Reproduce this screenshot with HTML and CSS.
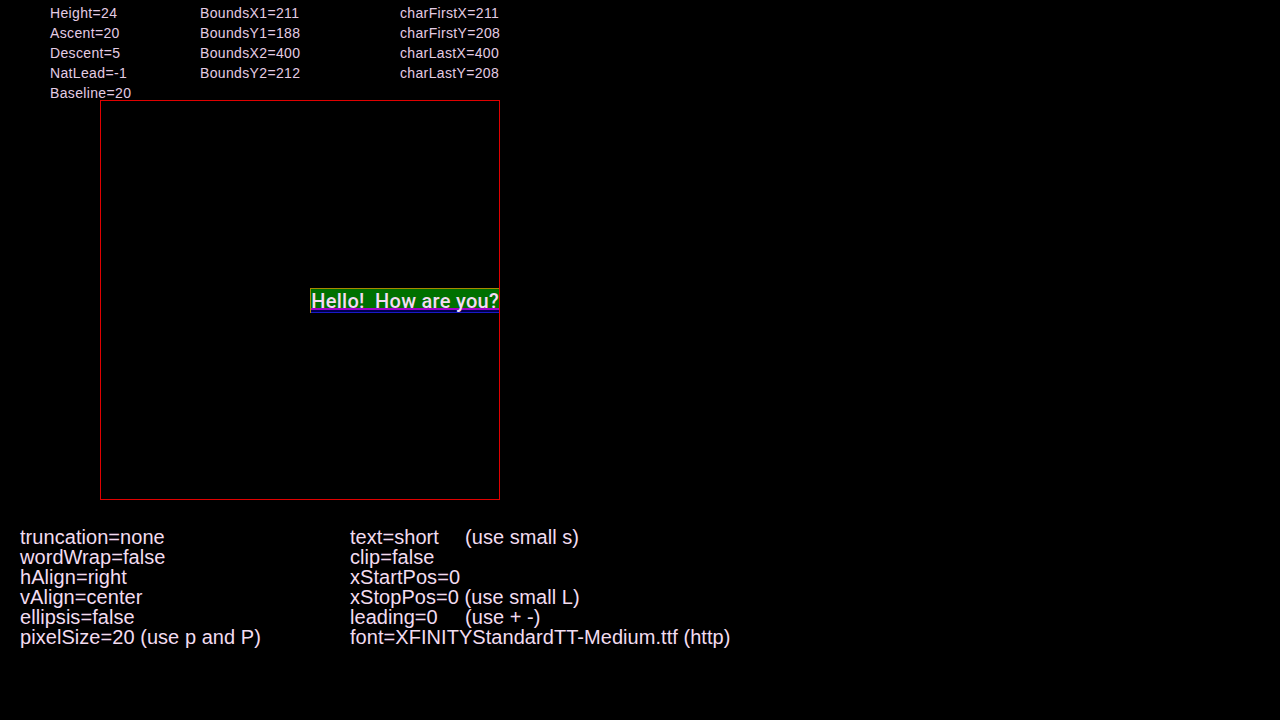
FILE: index.html
```html
<!DOCTYPE html>
<html>
<head>
<meta charset="utf-8">
<link rel="stylesheet" href="styles.css">
</head>
<body>
<div class="metrics">
  <div class="col c1">
    <div>Height=24</div>
    <div>Ascent=20</div>
    <div>Descent=5</div>
    <div>NatLead=-1</div>
    <div>Baseline=20</div>
  </div>
  <div class="col c2">
    <div>BoundsX1=211</div>
    <div>BoundsY1=188</div>
    <div>BoundsX2=400</div>
    <div>BoundsY2=212</div>
  </div>
  <div class="col c3">
    <div>charFirstX=211</div>
    <div>charFirstY=208</div>
    <div>charLastX=400</div>
    <div>charLastY=208</div>
  </div>
</div>
<div class="stage">
  <div class="label">Hello!  How are you?</div>
</div>
<div class="settings">
  <div class="col s1">
    <div>truncation=none</div>
    <div>wordWrap=false</div>
    <div>hAlign=right</div>
    <div>vAlign=center</div>
    <div>ellipsis=false</div>
    <div>pixelSize=20 (use p and P)</div>
  </div>
  <div class="col s2">
    <div><span class="key">text=short</span>(use small s)</div>
    <div>clip=false</div>
    <div>xStartPos=0</div>
    <div>xStopPos=0 (use small L)</div>
    <div><span class="key">leading=0</span>(use + -)</div>
    <div>font=XFINITYStandardTT-Medium.ttf (http)</div>
  </div>
</div>
</body>
</html>
```
FILE: styles.css
```css
html, body {
  margin: 0;
  padding: 0;
  background: #000;
}
body {
  width: 1280px;
  height: 720px;
  overflow: hidden;
  font-family: "Liberation Sans", Arial, sans-serif;
  color: #f2dcf0;
}
.metrics {
  height: 100px;
  box-sizing: border-box;
  padding: 3px 0 0 50px;
  display: flex;
  font-size: 14px;
  line-height: 20px;
  color: #e4cce4;
  letter-spacing: 0.35px;
}
.c1 { width: 150px; }
.c2 { width: 200px; }
.stage {
  margin-left: 100px;
  width: 400px;
  height: 400px;
  box-sizing: border-box;
  border: 1px solid #e00000;
  display: flex;
  align-items: center;
  justify-content: flex-end;
}
.label {
  height: 24px;
  line-height: 24px;
  border-top: 1px solid #a88a00;
  border-left: 1px solid #a88a00;
  white-space: pre;
  font-family: Roboto, "Liberation Sans", sans-serif;
  font-weight: 500;
  font-size: 20px;
  letter-spacing: 0.28px;
  color: #f4dcf4;
  background: linear-gradient(to bottom, #007000 0 19px, #a000c8 19px 21px, #000050 21px 23px, #1818c8 23px 24px);
}
.settings {
  margin-top: 27px;
  padding-left: 20px;
  display: flex;
  font-size: 20px;
  line-height: 20px;
  letter-spacing: 0.05px;
}
.s1 { width: 330px; }
.key {
  display: inline-block;
  width: 115px;
}
```
